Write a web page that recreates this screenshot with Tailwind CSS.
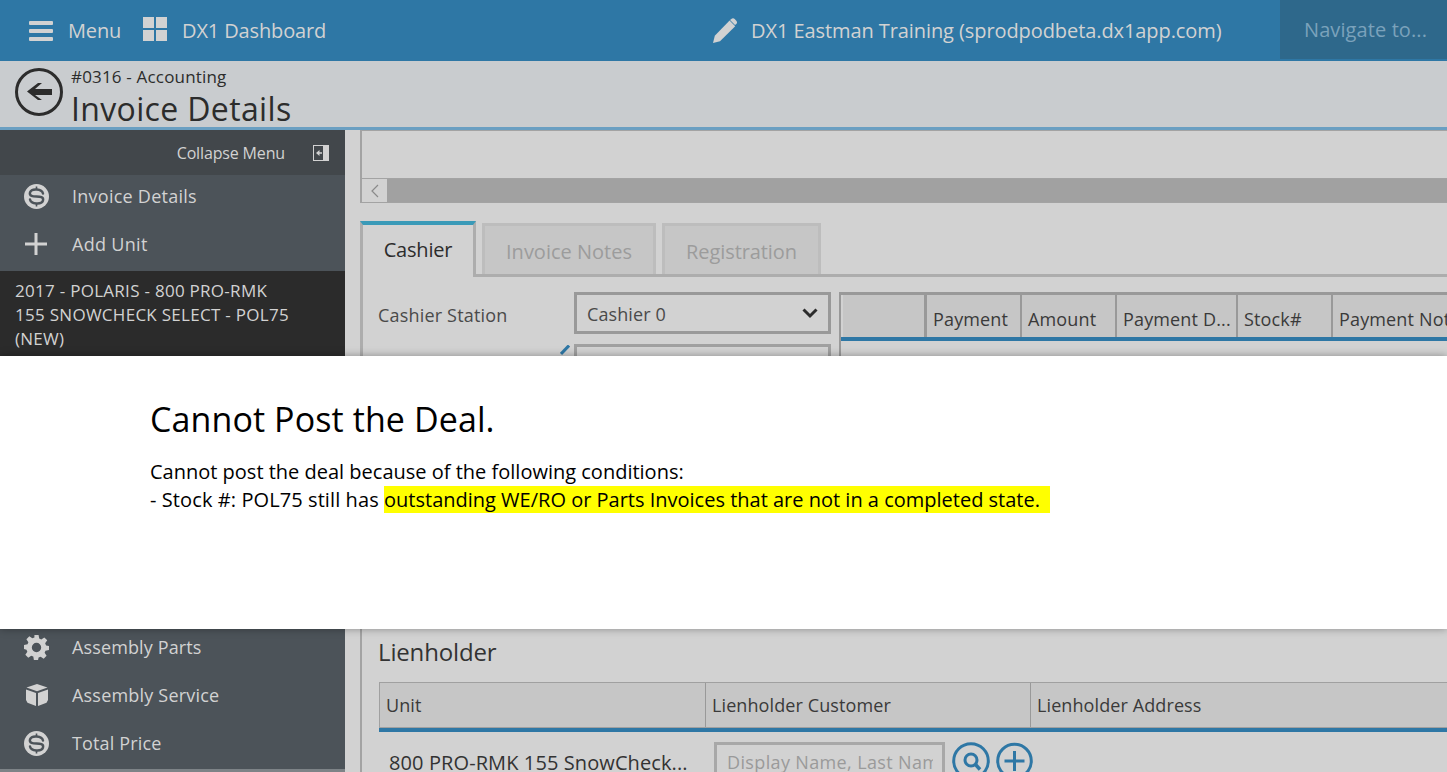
<!DOCTYPE html>
<html lang="en">
<head>
<meta charset="utf-8">
<script src="https://cdn.jsdelivr.net/npm/@tailwindcss/browser@4"></script>
<title>Invoice Details</title>
</head>
<body class="overflow-hidden">
<div class="relative w-[1447px] h-[772px] overflow-hidden flex flex-col bg-[#d2d2d2] font-['Open_Sans','Noto_Sans',sans-serif] text-[#333]">

  <!-- Top bar -->
  <header class="h-[61px] shrink-0 flex items-stretch bg-[#2e77a5] text-[#d2d2d2] text-[20px]">
    <div class="flex items-center pl-[29px] w-[182px]">
      <svg class="w-[24px] h-[20px] mr-[15px]" viewBox="0 0 24 20" fill="#d2d2d2"><rect y="0" width="24" height="4" rx="1"/><rect y="8" width="24" height="4" rx="1"/><rect y="16" width="24" height="4" rx="1"/></svg>
      <span class="tracking-[-0.15px]">Menu</span>
    </div>
    <div class="flex items-center w-[529px] -ml-[39px]">
      <svg class="w-[24px] h-[24px] mr-[15px] mb-[3px]" viewBox="0 0 24 24" fill="#d2d2d2"><rect width="11" height="11"/><rect x="13" width="11" height="11"/><rect y="13" width="11" height="11"/><rect x="13" y="13" width="11" height="11"/></svg>
      <span class="tracking-[-0.13px]">DX1 Dashboard</span>
    </div>
    <div class="flex items-center flex-1 pl-[41px]">
      <svg class="w-[24px] h-[25px] mr-[14px]" viewBox="0 0 24 25" fill="#d2d2d2"><path d="M0 25l1.800-7.200L16.600 2.600l5.600 5.700L7 23.300z"/><path d="M18 1.300C19.300 0 20.600 0 21.700 1l1.600 1.700c1 1.100 1 2.300-.2 3.600L22 7 17 2z"/></svg>
      <span class="tracking-[-0.08px] whitespace-nowrap">DX1 Eastman Training (sprodpodbeta.dx1app.com)</span>
    </div>
    <div class="w-[167px] h-[59px] shrink-0 flex items-center pl-[24px] pt-[1px] bg-[#2e688b] text-[#7ba2bb]"><span class="tracking-[0.1px]">Navigate to...</span></div>
  </header>

  <!-- Page title -->
  <div class="h-[69px] shrink-0 flex bg-[#c9cccf] border-b-[3px] border-[#6a9fc2] text-[#2c2c2c]">
    <svg class="w-[50px] h-[50px] ml-[14px] mt-[6px] shrink-0" viewBox="0 0 50 50"><circle cx="25" cy="25" r="22.500" fill="none" stroke="#2c2c2c" stroke-width="3"/><path d="M13 24.500L24 16h4l-7 6h17v6H21l7 5h-4z" fill="#2c2c2c"/></svg>
    <div class="ml-[7px]">
      <div class="text-[17px] leading-[20px] mt-[6px] tracking-[0.18px]">#0316 - Accounting</div>
      <div class="text-[32px] leading-[36px] mt-[4px] tracking-[0.35px]">Invoice Details</div>
    </div>
  </div>

  <div class="flex flex-1 min-h-0">
    <!-- Sidebar -->
    <aside class="w-[345px] shrink-0 bg-[#4c5359] text-[#d2d2d2] text-[18px] flex flex-col">
      <div class="h-[45px] shrink-0 bg-[#42474b] flex items-center justify-end pr-[16px] text-[16px] tracking-[-0.15px]">
        <span class="mr-[28px]">Collapse Menu</span>
        <svg class="w-[16px] h-[16px]" viewBox="0 0 16 16"><rect x=".5" y=".5" width="15" height="15" fill="#42474b" stroke="#d2d2d2"/><rect x="10" y="1" width="5" height="14" fill="#d2d2d2"/><path d="M3 8l3.500-3v2.200H9v1.600H6.500V11z" fill="#d2d2d2"/></svg>
      </div>
      <div class="h-[48px] pb-[6px] shrink-0 flex items-center">
        <svg class="w-[25px] h-[25px] ml-[24px] mr-[23px]" viewBox="0 0 25 25"><circle cx="12.500" cy="12.500" r="12.500" fill="#d2d2d2"/><path d="M19 9.500C18 4.800 7.500 4 6 8.500 5 12 9 12.500 12.500 12.500c3.500 0 7.500.5 6.500 4C17.500 21 7 20.200 6 15.500" fill="none" stroke="#4c5359" stroke-width="2.400" stroke-linecap="round"/><path d="M12.500 2.500v2.500M12.500 20v2.500" stroke="#4c5359" stroke-width="1.600"/></svg>
        <span class="tracking-[0.25px]">Invoice Details</span>
      </div>
      <div class="h-[48px] pb-[6px] shrink-0 flex items-center">
        <svg class="w-[22px] h-[22px] ml-[25px] mr-[25px]" viewBox="0 0 22 22" fill="#d2d2d2"><rect y="9.500" width="22" height="3"/><rect x="9.500" width="3" height="22"/></svg>
        <span class="tracking-[0.3px]">Add Unit</span>
      </div>
      <div class="h-[85px] shrink-0 bg-[#2b2b2b] px-[15px] pt-[8px] text-[17px] leading-[24px] tracking-[0.28px]">2017 - POLARIS - 800 PRO-RMK<br>155 SNOWCHECK SELECT - POL75<br>(NEW)</div>
      <div class="h-[270px] shrink-0"></div>
      <div class="h-[48px] pb-[6px] shrink-0 flex items-center">
        <svg class="w-[25px] h-[25px] ml-[24px] mr-[23px]" viewBox="0 0 24 24"><path fill="#d2d2d2" fill-rule="evenodd" d="M10 0h4l.6 3.400 2 .8L19.500 2.300l2.800 2.800-2 2.800.9 2.100L24 10.500v4l-3.400.6-.8 2 1.900 2.900-2.800 2.800-2.900-1.900-2 .8L13.500 24h-4l-.6-3.300-2-.8-2.800 1.900-2.800-2.800 1.900-2.900-.8-2L0 13.500v-4l3.400-.6.800-2-1.900-2.800L5.100 1.300l2.900 1.900 2-.8zM12 7.500a4.500 4.500 0 1 0 0 9 4.500 4.500 0 0 0 0-9z"/></svg>
        <span class="tracking-[0.13px]">Assembly Parts</span>
      </div>
      <div class="h-[48px] pb-[6px] shrink-0 flex items-center">
        <svg class="w-[24px] h-[22px] ml-[25px] mr-[23px]" viewBox="0 0 24 22" fill="#d2d2d2"><path d="M12 0l10.500 3.500L12 7.200 1.500 3.500z"/><path d="M1 5.500l10 3.600V22l-8.500-3.200L1 16z"/><path d="M23 5.500L13 9.100V22l8.500-3.200L23 16z"/></svg>
        <span class="tracking-[0.2px]">Assembly Service</span>
      </div>
      <div class="h-[48px] pb-[6px] shrink-0 flex items-center">
        <svg class="w-[25px] h-[25px] ml-[24px] mr-[23px]" viewBox="0 0 25 25"><circle cx="12.500" cy="12.500" r="12.500" fill="#d2d2d2"/><path d="M19 9.500C18 4.800 7.500 4 6 8.500 5 12 9 12.500 12.500 12.500c3.500 0 7.500.5 6.500 4C17.500 21 7 20.200 6 15.500" fill="none" stroke="#4c5359" stroke-width="2.400" stroke-linecap="round"/><path d="M12.500 2.500v2.500M12.500 20v2.500" stroke="#4c5359" stroke-width="1.600"/></svg>
        <span class="tracking-[0.15px]">Total Price</span>
      </div>
      <div class="h-[3px] -mt-[1px] bg-[#7d8387]"></div>
    </aside>

    <!-- Main column -->
    <main class="flex-1 min-w-0 pl-[15px] text-[20px]">
      <div class="h-[73px] border-l-2 border-[#a3a3a3] border-t flex flex-col">
        <div class="flex-1"></div>
        <div class="h-[25px] flex border-y border-[#a3a3a3] bg-[#a1a1a1]">
          <div class="w-[25px] h-full bg-[#d2d2d2] flex items-center justify-center">
            <svg class="w-[9px] h-[14px]" viewBox="0 0 9 14"><path d="M8 1L2 7l6 6" fill="none" stroke="#8a8a8a" stroke-width="1.200"/></svg>
          </div>
        </div>
      </div>

      <!-- Tabs -->
      <div class="mt-[18px] h-[56px] flex items-end border-b-[3px] border-[#adadad]">
        <div class="w-[116px] h-[56px] -mb-[3px] bg-[#d2d2d2] border-t-[4px] border-t-[#3a9ab8] border-x-[3px] border-x-[#adadad] flex justify-center pt-[10px] text-[#2c2c2c] relative tracking-[-0.18px]">Cashier</div>
        <div class="ml-[6px] w-[174px] h-[51px] bg-[#c6c6c6] border-[3px] border-b-0 border-[#bdbdbd] flex justify-center pt-[11px] text-[#9c9c9c]">Invoice Notes</div>
        <div class="ml-[6px] w-[159px] h-[51px] bg-[#c6c6c6] border-[3px] border-b-0 border-[#bdbdbd] flex justify-center pt-[11px] text-[#9c9c9c] tracking-[-0.08px]">Registration</div>
      </div>

      <!-- Cashier panel -->
      <div class="h-[79px] border-l-[3px] border-[#adadad] flex relative overflow-hidden">
        <div class="w-[211px] shrink-0">
          <div class="pl-[15px] mt-[24px] text-[18px] leading-[28px] tracking-[0.18px] text-[#4a4a4a]">Cashier Station</div>
        </div>
        <div class="w-[257px] shrink-0 mt-[15px]">
          <div class="h-[42px] border-[3px] border-[#999] flex items-center justify-between pl-[10px] pr-[10px] text-[18px] text-[#4a4a4a] tracking-[0.1px]">
            <span class="pt-[2px]">Cashier 0</span>
            <svg class="w-[16px] h-[11px]" viewBox="0 0 16 11"><path d="M1.500 1.500L8 8l6.500-6.500" fill="none" stroke="#2c2c2c" stroke-width="3"/></svg>
          </div>
          <div class="h-[30px] mt-[10px] border-[3px] border-[#a0a0a0]"></div>
        </div>
        <svg class="absolute left-[197px] top-[68px] w-[10px] h-[12px]" viewBox="0 0 10 12"><path d="M9 0.500L1 9" fill="none" stroke="#2e77a5" stroke-width="3"/></svg>
        <div class="ml-[8px] flex-1 min-w-0 mt-[15px] border-t-[3px] border-[#999] border-l-[2px] flex flex-col overflow-hidden">
          <div class="h-[42px] shrink-0 flex bg-[#c6c6c6] text-[18px] text-[#3a3a3a] tracking-[0.15px] whitespace-nowrap">
            <div class="w-[86px] shrink-0 border-l-[2px] border-[#d2d2d2] border-r-[3px] border-r-[#999]"></div>
            <div class="w-[95px] shrink-0 border-r-[2px] border-[#999] pl-[6px] pt-[11px]">Payment</div>
            <div class="w-[95px] shrink-0 border-r-[2px] border-[#999] pl-[6px] pt-[11px]">Amount</div>
            <div class="w-[121px] shrink-0 border-r-[2px] border-[#999] pl-[6px] pt-[11px]">Payment D...</div>
            <div class="w-[95px] shrink-0 border-r-[2px] border-[#999] pl-[6px] pt-[11px]">Stock#</div>
            <div class="flex-1 pl-[6px] pt-[11px]">Payment Notes</div>
          </div>
          <div class="h-[4px] shrink-0 bg-[#2e77a5]"></div>
        </div>
      </div>

      <!-- Hidden behind dialog -->
      <div class="h-[273px]"></div>

      <!-- Lienholder -->
      <div class="border-l-2 border-[#a3a3a3] pl-[17px] h-[143px] overflow-hidden">
        <div class="h-[53px] pt-[6px] -ml-[1px] text-[24px] leading-[34px] tracking-[-0.15px] text-[#333]">Lienholder</div>
        <div class="h-[46px] flex bg-[#c6c6c6] border border-[#a0a0a0] border-r-0 text-[18px] text-[#3a3a3a] tracking-[0.1px] whitespace-nowrap">
          <div class="w-[326px] shrink-0 border-r border-[#999] pl-[6px] pt-[9px]">Unit</div>
          <div class="w-[325px] shrink-0 border-r border-[#999] pl-[6px] pt-[9px]">Lienholder Customer</div>
          <div class="flex-1 pl-[6px] pt-[9px]">Lienholder Address</div>
        </div>
        <div class="h-[4px] bg-[#2e77a5]"></div>
        <div class="flex pl-[10px] pt-[10px]">
          <div class="w-[325px] shrink-0 pt-[7px] text-[20px] leading-[28px] text-[#333] tracking-[0.1px] whitespace-nowrap">800 PRO-RMK 155 SnowCheck...</div>
          <div class="w-[231px] h-[50px] shrink-0 border-[3px] border-[#a8a8a8] pl-[10px] pr-[9px] pt-[4px] text-[18px] text-[#9a9a9a] tracking-[0.36px]"><div class="overflow-hidden whitespace-nowrap">Display Name, Last Name</div></div>
          <svg class="w-[38px] h-[38px] ml-[7px] mt-[0px] shrink-0" viewBox="0 0 38 38"><circle cx="19" cy="19" r="17.300" fill="none" stroke="#2e77a5" stroke-width="3"/><circle cx="19" cy="18" r="6" fill="none" stroke="#2e77a5" stroke-width="3"/><path d="M23.500 22.500l4.500 5" stroke="#2e77a5" stroke-width="3.500"/></svg>
          <svg class="w-[37px] h-[38px] ml-[6px] shrink-0" viewBox="0 0 37 38"><circle cx="18.500" cy="19" r="16.800" fill="none" stroke="#2e77a5" stroke-width="3"/><path d="M18.500 9v20M8.500 19h20" stroke="#2e77a5" stroke-width="3"/></svg>
        </div>
      </div>
    </main>
  </div>

  <!-- Dialog over the page -->
  <div class="absolute left-0 right-0 top-[356px] h-[273px] bg-white shadow-[0_0_8px_rgba(0,0,0,0.35)] pl-[150px] pt-[41px] text-black">
    <h1 class="text-[34px] leading-[44px] tracking-[0.1px]">Cannot Post the Deal.</h1>
    <p class="mt-[17px] text-[20px] leading-[28px]">Cannot post the deal because of the following conditions:<br><span class="tracking-[0.09px]">- Stock #: POL75 still has </span><span class="bg-[#ffff00]">outstanding WE/RO or Parts Invoices that are not in a completed state. &nbsp;</span></p>
  </div>
</div>
</body>
</html>
